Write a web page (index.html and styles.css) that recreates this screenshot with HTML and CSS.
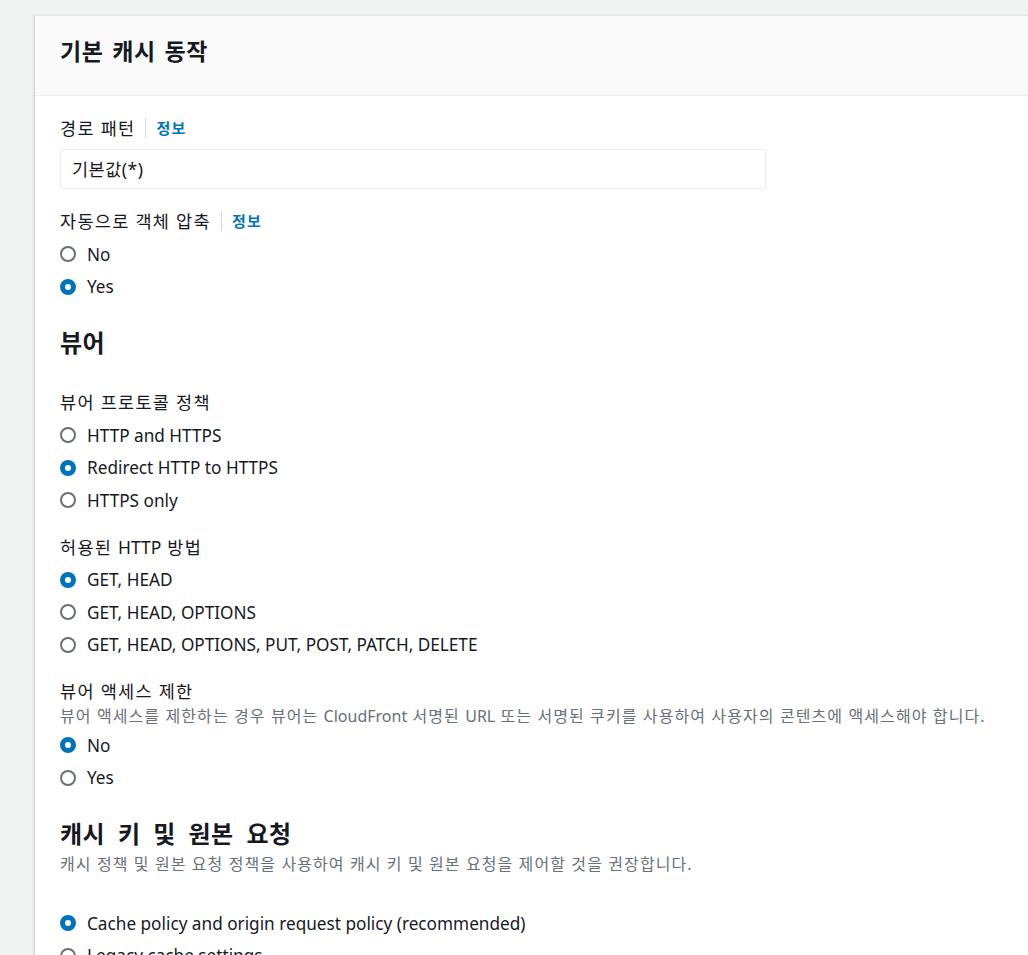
FILE: index.html
```html
<!DOCTYPE html>
<html lang="ko">
<head>
<meta charset="utf-8">
<link rel="stylesheet" href="styles.css">
</head>
<body>
<div class="page">
  <div class="card">
    <div class="card-header"><h2 class="card-title">기본 캐시 동작</h2></div>
    <div class="card-body">
      <div class="field">
        <div class="label">경로 패턴<span class="info">정보</span></div>
        <div class="input">기본값(*)</div>
      </div>
      <div class="field field-gap">
        <div class="label">자동으로 객체 압축<span class="info">정보</span></div>
        <div class="options">
          <div class="opt"><span class="radio"></span>No</div>
          <div class="opt"><span class="radio on"></span>Yes</div>
        </div>
      </div>

      <h3 class="section-title">뷰어</h3>
      <div class="field field-first">
        <div class="label">뷰어 프로토콜 정책</div>
        <div class="options">
          <div class="opt"><span class="radio"></span>HTTP and HTTPS</div>
          <div class="opt"><span class="radio on"></span>Redirect HTTP to HTTPS</div>
          <div class="opt"><span class="radio"></span>HTTPS only</div>
        </div>
      </div>
      <div class="field field-next">
        <div class="label">허용된 <span class="lat">HTTP</span> 방법</div>
        <div class="options">
          <div class="opt"><span class="radio on"></span>GET, HEAD</div>
          <div class="opt"><span class="radio"></span>GET, HEAD, OPTIONS</div>
          <div class="opt"><span class="radio"></span>GET, HEAD, OPTIONS, PUT, POST, PATCH, DELETE</div>
        </div>
      </div>
      <div class="field field-next">
        <div class="label">뷰어 액세스 제한</div>
        <div class="desc">뷰어 액세스를 제한하는 경우 뷰어는 <span class="lat">CloudFront</span> 서명된 <span class="lat">URL</span> 또는 서명된 쿠키를 사용하여 사용자의 콘텐츠에 액세스해야 합니다.</div>
        <div class="options options-tight">
          <div class="opt"><span class="radio on"></span>No</div>
          <div class="opt"><span class="radio"></span>Yes</div>
        </div>
      </div>

      <h3 class="section-title section-wide">캐시 키 및 원본 요청</h3>
      <div class="desc desc-section">캐시 정책 및 원본 요청 정책을 사용하여 캐시 키 및 원본 요청을 제어할 것을 권장합니다.</div>
      <div class="options options-loose">
        <div class="opt"><span class="radio on"></span>Cache policy and origin request policy (recommended)</div>
        <div class="opt"><span class="radio"></span>Legacy cache settings</div>
      </div>
    </div>
  </div>
</div>
</body>
</html>
```
FILE: styles.css
```css
html, body {
  margin: 0;
  padding: 0;
  background: #f2f3f3;
  height: 955px;
  overflow: hidden;
}
body {
  font-family: "Noto Sans", "Noto Sans CJK KR", sans-serif;
  color: #16191f;
  font-size: 17.2px;
}
.page {
  padding: 15px 0 0 34px;
}
.card {
  background: #ffffff;
  border-top: 1px solid #e4e7e7;
  border-left: 1px solid #d5dbdb;
  box-shadow: -1px 0 1px rgba(0,28,36,0.08);
  min-height: 1000px;
}
.card-header {
  background: #fafafa;
  height: 79px;
  border-bottom: 1px solid #eaeded;
  display: flex;
  align-items: center;
  padding-left: 25px;
}
.card-title {
  margin: 0;
  font-size: 23px;
  letter-spacing: 0.5px;
  word-spacing: 2.5px;
  font-weight: 700;
  line-height: 30px;
  position: relative;
  top: -5px;
}
.card-body {
  padding: 20px 25px 0 25px;
}
.label {
  font-size: 17.5px;
  letter-spacing: 1.3px;
  line-height: 24px;
  display: flex;
  align-items: center;
  white-space: pre;
}
.lat { letter-spacing: 0; }
.info {
  font-size: 15px;
  letter-spacing: 1.3px;
  font-weight: 700;
  color: #0073bb;
  border-left: 1px solid #d5dbdb;
  margin-left: 10px;
  padding-left: 10px;
  line-height: 20px;
}
.input {
  margin-top: 9px;
  width: 681px;
  height: 38px;
  border: 1px solid #eaeded;
  border-radius: 2px;
  padding: 0 12px 0 11px;
  line-height: 38px;
  font-size: 17.5px;
  letter-spacing: 0.5px;
}
.field-gap { margin-top: 20px; }
.field-first { margin-top: 32px; }
.field-next { margin-top: 18px; }
.options { padding-top: 5px; }
.options-tight { padding-top: 2px; }
.options-loose { padding-top: 32px; }
.opt {
  height: 32.5px;
  display: flex;
  align-items: center;
  gap: 11px;
}
.radio {
  width: 12px;
  height: 12px;
  border: 2px solid #687078;
  border-radius: 50%;
  flex: none;
}
.radio.on {
  width: 6px;
  height: 6px;
  border: 5px solid #0073bb;
}
.section-title {
  margin: 25px 0 0 0;
  font-size: 24px;
  letter-spacing: 0.5px;
  word-spacing: 3px;
  font-weight: 700;
  line-height: 30px;
}
.section-wide { word-spacing: 6px; }
.desc {
  font-size: 16px;
  letter-spacing: 1.1px;
  color: #687078;
  line-height: 22px;
  margin-top: 2px;
  white-space: nowrap;
}
.desc-section { margin-top: 4px; }
```
